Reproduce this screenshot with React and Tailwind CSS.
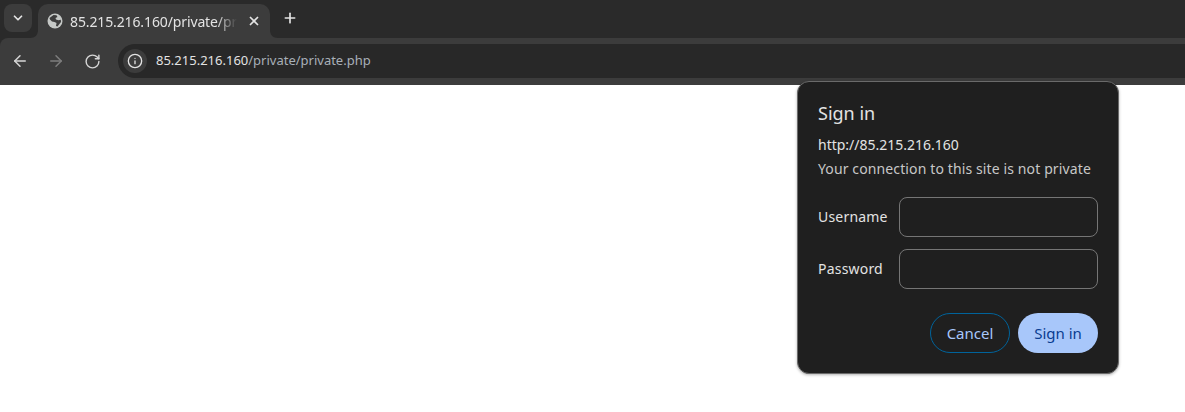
import { ArrowLeft, ArrowRight, ChevronDown, Info, Plus, RotateCw, X } from 'lucide-react';

function Globe() {
  return (
    <svg width="16" height="16" viewBox="0 0 16 16" className="shrink-0">
      <circle cx="8" cy="8" r="7.5" fill="#c4c7c5" />
      <path d="M6.5 2 9.5 2.2 10.5 4 8.5 5 9 6.5 11.5 7.2 13.8 6.8 14 9 12 11.5 10.5 13.5 9 13 9.5 10 7.5 9 5 8.5 3 6.5 2.5 5Z" fill="#3c3c3c" />
    </svg>
  );
}

function Field({ label }) {
  return (
    <div className="flex items-center">
      <label className="w-[81px] text-[14px] leading-5 tracking-[0.2px] text-[#e3e3e3]">{label}</label>
      <input className="h-10 w-[199px] rounded-lg border border-[#757575] bg-transparent" />
    </div>
  );
}

function SignInDialog() {
  return (
    <div className="absolute left-[797px] top-[81px] h-[293px] w-[322px] rounded-xl border border-[#6a6a6a] bg-[#1f1f1f] px-5 pt-[19px] shadow-[0_1px_3px_rgba(0,0,0,0.3)]">
      <h1 className="text-[18px] leading-6 text-[#e3e3e3]">Sign in</h1>
      <p className="mt-[10px] text-[14px] leading-5 text-[#e3e3e3]">http://85.215.216.160</p>
      <p className="mt-[4px] text-[14px] leading-5 tracking-[0.12px] text-[#c7c7c7]">Your connection to this site is not private</p>
      <div className="mt-[18px] flex flex-col gap-3">
        <Field label="Username" />
        <Field label="Password" />
      </div>
      <div className="mt-6 flex justify-end gap-2">
        <button className="h-10 w-20 rounded-full border border-[#00639b] text-[15px] text-[#a8c7fa]">Cancel</button>
        <button className="h-10 w-20 rounded-full bg-[#a8c7fa] text-[15px] text-[#0a3d91]">Sign in</button>
      </div>
    </div>
  );
}

export default function App() {
  return (
    <div className="relative h-[412px] w-[1185px] overflow-hidden bg-white font-['Noto_Sans',sans-serif]">
      {/* tab strip */}
      <div className="flex h-[38px] items-start bg-[#2a2a2a] pt-1">
        <button className="ml-1 flex h-7 w-7 items-center justify-center rounded-lg bg-[#3c3c3c] text-[#e3e3e3]">
          <ChevronDown size={14} strokeWidth={3} />
        </button>
        <div className="relative ml-[6px] flex h-[34px] w-[232px] items-center rounded-t-[10px] bg-[#3c3c3c] pl-[9px]">
          <Globe />
          <span className="ml-[7px] w-[167px] overflow-hidden whitespace-nowrap text-[14px] tracking-[-0.12px] text-[#e3e3e3] [mask-image:linear-gradient(to_right,black_88%,transparent_100%)]">
            85.215.216.160/private/private.php
          </span>
          <X size={14} strokeWidth={3} className="ml-[10px] text-[#e3e3e3]" />
          <svg width="8" height="8" viewBox="0 0 8 8" className="absolute -right-2 bottom-0">
            <path d="M0 0C0 5 3 8 8 8H0Z" fill="#3c3c3c" />
          </svg>
          <svg width="8" height="8" viewBox="0 0 8 8" className="absolute -left-2 bottom-0">
            <path d="M8 0C8 5 5 8 0 8H8Z" fill="#3c3c3c" />
          </svg>
        </div>
        <Plus size={16} strokeWidth={2.5} className="ml-[12px] mt-[6px] text-[#e3e3e3]" />
      </div>

      {/* toolbar */}
      <div className="bg-[#2a2a2a]">
        <div className="flex h-[47px] items-start rounded-tl-lg bg-[#3c3c3c] pt-[6px]">
          <div className="flex h-[34px] items-center">
            <ArrowLeft size={18} strokeWidth={2} className="ml-[11px] text-[#d6d6d6]" />
            <ArrowRight size={18} strokeWidth={2} className="ml-[18px] text-[#7d7d7d]" />
            <RotateCw size={17} strokeWidth={2} className="ml-[19px] text-[#d6d6d6]" />
          </div>
          <div className="ml-[17px] flex h-[34px] flex-1 items-center rounded-l-full bg-[#282828] pl-[5px]">
            <span className="flex h-6 w-6 items-center justify-center rounded-full bg-[#3c3c3c] text-[#e3e3e3]">
              <Info size={16} strokeWidth={2} />
            </span>
            <span className="ml-[9px] text-[13px] text-[#e3e3e3]">
              85.215.216.160<span className="text-[#a8b0b8]">/private/private.php</span>
            </span>
          </div>
        </div>
      </div>

      <SignInDialog />
    </div>
  );
}
